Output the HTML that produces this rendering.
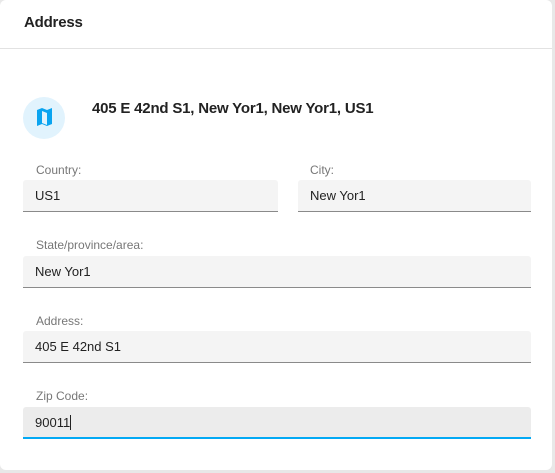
<!DOCTYPE html>
<html><head><style>
body{margin:0;width:555px;height:473px;background:#e8e8e8;font-family:"Liberation Sans",sans-serif;overflow:hidden;position:relative}
.card{position:absolute;left:0;top:0;width:552px;height:470px;background:#fff;border-radius:6px}
.hdr{position:absolute;left:24px;top:14px;font-size:15px;color:#222;font-weight:bold;letter-spacing:-0.2px}
.div{position:absolute;left:0;top:48px;width:552px;height:1px;background:#e2e2e2}
.ic{position:absolute;left:23px;top:97px;width:42px;height:42px;border-radius:50%;background:#e1f3fd}
.title{position:absolute;left:92px;top:100px;font-size:15px;font-weight:bold;color:#222;letter-spacing:-0.2px}
.lbl{position:absolute;font-size:12px;color:#777}
.f{position:absolute;background:#f4f4f4;border-bottom:1px solid #8a8a8a;border-radius:3px 3px 0 0;font-size:13px;color:#222;box-sizing:border-box;padding-left:12px;line-height:31px}
</style></head><body>
<div class="card">
<div class="hdr">Address</div>
<div class="div"></div>
<div class="ic"><svg width="42" height="42" viewBox="0 0 42 42"><path d="M14 13 L19 11 L24 13 L29 11 L29 27 L24 29 L19 27 L14 29 Z M19 14 L19 26 L24 28 L24 16 Z" fill="#0aa4f0" fill-rule="evenodd"/></svg></div>
<div class="title">405 E 42nd S1, New Yor1, New Yor1, US1</div>
<div class="lbl" style="left:36px;top:163px">Country:</div>
<div class="f" style="left:23px;top:180px;width:255px;height:32px">US1</div>
<div class="lbl" style="left:310px;top:163px">City:</div>
<div class="f" style="left:298px;top:180px;width:233px;height:32px">New Yor1</div>
<div class="lbl" style="left:36px;top:238px">State/province/area:</div>
<div class="f" style="left:23px;top:256px;width:508px;height:32px">New Yor1</div>
<div class="lbl" style="left:36px;top:314px">Address:</div>
<div class="f" style="left:23px;top:331px;width:508px;height:32px">405 E 42nd S1</div>
<div class="lbl" style="left:36px;top:389px">Zip Code:</div>
<div class="f" style="left:23px;top:407px;width:508px;height:32px;background:#ececec;border-bottom:2px solid #03a9f4">90011<span style="display:inline-block;width:1px;height:15px;background:#222;vertical-align:-3px"></span></div>
</div>
</body></html>
